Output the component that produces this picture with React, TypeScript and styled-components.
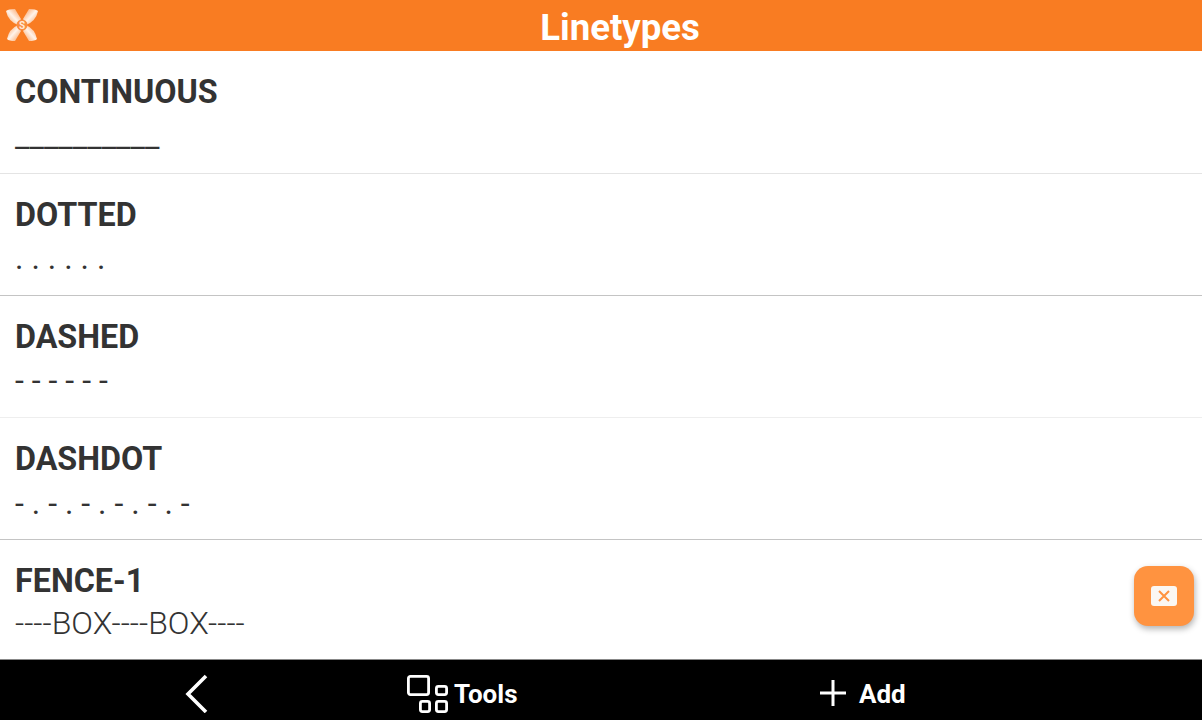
import React from "react";
import styled, { createGlobalStyle } from "styled-components";

const Global = createGlobalStyle`
  html, body { margin: 0; padding: 0; background: #fff; }
  body { font-family: Roboto, "Liberation Sans", sans-serif; }
`;

const Screen = styled.div`
  position: relative;
  width: 1202px;
  height: 720px;
  display: flex;
  flex-direction: column;
  overflow: hidden;
  background: #fff;
`;

const Header = styled.header`
  flex: 0 0 51px;
  height: 51px;
  overflow: hidden;
  background: #f97c22;
  display: flex;
  align-items: center;
  padding-left: 5px;
`;

const Logo = styled.svg`
  width: 34px;
  height: 34px;
  margin-top: -1px;
`;

const Title = styled.h1`
  flex: 1;
  margin: 0 0 0 -1px;
  padding-top: 4px;
  text-align: center;
  font-size: 36.6px;
  line-height: 47px;
  font-weight: 700;
  color: #fff;
`;

const List = styled.main`
  flex: 1;
  display: flex;
  flex-direction: column;
  min-height: 0;
`;

const Row = styled.div<{ $line: string }>`
  flex: 0 0 122px;
  box-sizing: border-box;
  padding: 21px 15px 0;
  border-bottom: 1px solid ${(p) => p.$line};
  color: #333;
  &:first-child {
    flex-basis: 123px;
  }
  &:last-child {
    flex: 1 1 auto;
  }
`;

const Name = styled.div`
  font-size: 32.3px;
  line-height: 40px;
  font-weight: 700;
  color: #333;
`;

const Pattern = styled.div<{ $top: number; $weight: number }>`
  margin-top: ${(p) => p.$top}px;
  font-size: 32px;
  line-height: 40px;
  font-weight: ${(p) => p.$weight};
  color: #333;
  white-space: nowrap;
`;

const Footer = styled.footer`
  flex: 0 0 60px;
  box-sizing: border-box;
  padding-top: 6px;
  background: #000;
  display: grid;
  grid-template-columns: 394px 410px 1fr;
  color: #fff;
`;

const NavItem = styled.div<{ $pad: number; $gap: number }>`
  display: flex;
  align-items: center;
  gap: ${(p) => p.$gap}px;
  padding-left: ${(p) => p.$pad}px;
  font-size: 26px;
  font-weight: 700;
`;

const NavLabel = styled.span`
  padding-top: 2px;
`;

const Float = styled.button`
  position: absolute;
  left: 1134px;
  top: 566px;
  width: 60px;
  height: 60px;
  padding: 0;
  border: none;
  border-radius: 14px;
  background: #ff9340;
  box-shadow: 1px 3px 6px rgba(0, 0, 0, 0.3);
  display: flex;
  align-items: center;
  justify-content: center;
`;

const rows = [
  { name: "CONTINUOUS", pattern: "__________", top: 4, line: "#e4e4e4", weight: 400 },
  { name: "DOTTED", pattern: ". . . . . .", top: 3, line: "#c4c4c4", weight: 400 },
  { name: "DASHED", pattern: "- - - - - -", top: 3, line: "#eeeeee", weight: 400 },
  { name: "DASHDOT", pattern: "- . - . - . - . - . -", top: 4, line: "#c4c4c4", weight: 400 },
  { name: "FENCE-1", pattern: "----BOX----BOX----", top: 2, line: "#888888", weight: 300 },
];

export default function App() {
  return (
    <Screen>
      <Global />
      <Header>
        <Logo viewBox="0 0 34 34">
          <defs>
            <linearGradient id="lobeA" x1="0" y1="1" x2="1" y2="0">
              <stop offset="0.15" stopColor="#fbb27d" />
              <stop offset="0.5" stopColor="#fff3ea" />
              <stop offset="0.9" stopColor="#fba56a" />
            </linearGradient>
            <linearGradient id="lobeB" x1="0" y1="0" x2="1" y2="1">
              <stop offset="0.1" stopColor="#fba56a" />
              <stop offset="0.5" stopColor="#fff3ea" />
              <stop offset="0.85" stopColor="#fbb27d" />
            </linearGradient>
          </defs>
          <path d="M1 3Q3 1 10 1L16 11 13 17Q3 13 1 3Z" fill="url(#lobeA)" />
          <path d="M33 3Q31 1 24 1L18 11 21 17Q31 13 33 3Z" fill="url(#lobeB)" />
          <path d="M2 31Q4 33 10 33L16 23 13 17Q4 21 2 31Z" fill="url(#lobeB)" />
          <path d="M32 31Q30 33 24 33L18 23 21 17Q30 21 32 31Z" fill="url(#lobeA)" />
          <circle cx="17" cy="17" r="5.5" fill="#f98d40" />
          <text x="17" y="20.5" textAnchor="middle" fontSize="10" fontWeight="700" fill="#ffe9d8" fontFamily="Roboto, sans-serif">
            S
          </text>
        </Logo>
        <Title>Linetypes</Title>
      </Header>
      <List>
        {rows.map((r) => (
          <Row key={r.name} $line={r.line}>
            <Name>{r.name}</Name>
            <Pattern $top={r.top} $weight={r.weight}>
              {r.pattern}
            </Pattern>
          </Row>
        ))}
      </List>
      <Footer>
        <NavItem $pad={182} $gap={0}>
          <svg width="30" height="40" viewBox="0 0 30 40" fill="none" stroke="#fff" strokeWidth="3.6">
            <path d="M24 3 6 21l18 18" />
          </svg>
        </NavItem>
        <NavItem $pad={13} $gap={6}>
          <svg width="41" height="40" viewBox="0 0 41 40" fill="none" stroke="#fff" strokeWidth="2.8" strokeLinejoin="round">
            <rect x="1.4" y="3.4" width="20.2" height="18.2" rx="2" />
            <rect x="29.4" y="13.4" width="10.2" height="8.2" rx="2" />
            <rect x="13.4" y="28.4" width="9.2" height="10.2" rx="2" />
            <rect x="29.4" y="28.4" width="10.2" height="10.2" rx="2" />
          </svg>
          <NavLabel>Tools</NavLabel>
        </NavItem>
        <NavItem $pad={14} $gap={11}>
          <svg width="30" height="30" viewBox="0 0 30 30" fill="none" stroke="#fff" strokeWidth="3">
            <path d="M15 2v26M2 15h26" />
          </svg>
          <NavLabel>Add</NavLabel>
        </NavItem>
      </Footer>
      <Float aria-label="close">
        <svg width="26" height="20" viewBox="0 0 26 20">
          <rect width="26" height="20" rx="3" fill="#fbf7f3" />
          <path d="M8 5l10 10M18 5 8 15" stroke="#ff9340" strokeWidth="2" fill="none" />
        </svg>
      </Float>
    </Screen>
  );
}
